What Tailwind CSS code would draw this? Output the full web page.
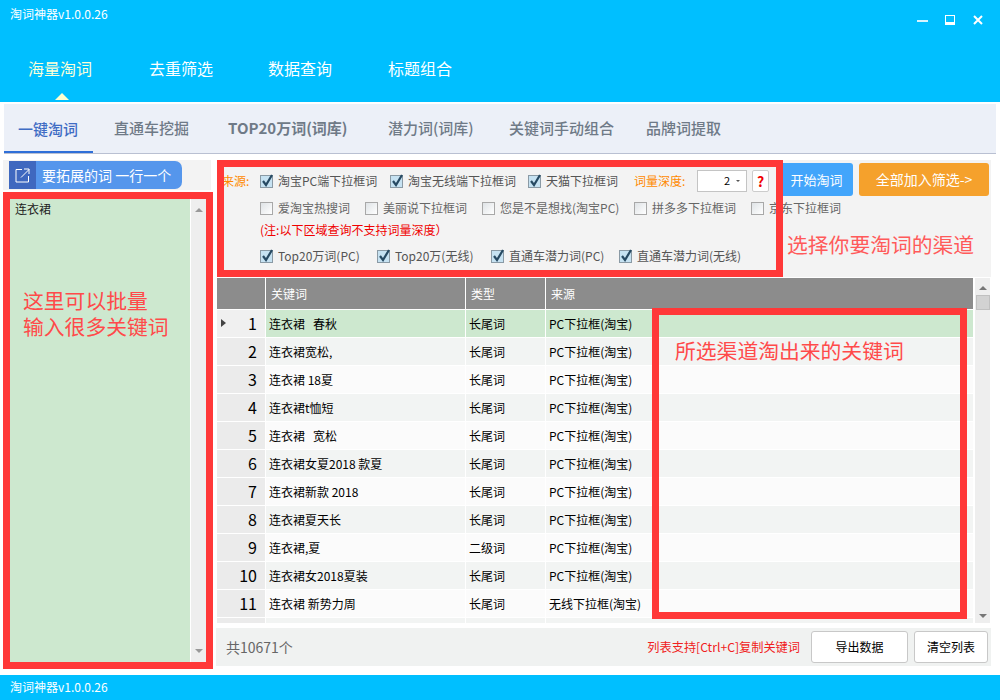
<!DOCTYPE html>
<html lang="zh-CN">
<head>
  <meta charset="UTF-8">
  <title>淘词神器</title>
  <script src="https://cdn.jsdelivr.net/npm/@tailwindcss/browser@4"></script>
</head>
<body class="bg-white text-black font-['Noto_Sans_CJK_SC','Noto_Sans',sans-serif]">
<div class="w-[1000px] h-[700px] overflow-hidden flex flex-col">

  <!-- Header -->
  <header class="relative h-[102px] shrink-0 bg-[#00bfff] text-white">
    <div class="pl-[10px] pt-[5px] text-[12px] leading-[18px] font-['Noto_Sans_CJK_SC','Roboto',sans-serif]">淘词神器v1.0.0.26</div>
    <div class="absolute right-[17px] top-[15px] flex items-center">
      <svg width="11" height="10" viewBox="0 0 11 10"><rect x="0" y="5" width="11" height="2" fill="#d6f4ff"/></svg>
      <svg class="ml-[17px]" width="10" height="10" viewBox="0 0 10 10"><rect x="0" y="0" width="10" height="10" fill="#fff"/><rect x="1" y="1" width="8" height="6" fill="#00bfff"/></svg>
      <svg class="ml-[18px]" width="10" height="10" viewBox="0 0 10 10"><path d="M1 1L9 9M9 1L1 9" stroke="#fff" stroke-width="2"/></svg>
    </div>
    <nav class="absolute left-0 top-[56px] flex text-[16px] leading-[24px]">
      <div class="relative ml-[28px] w-[121px] text-[#fdffd8]">海量淘词
        <div class="absolute left-[27px] top-[37px] w-0 h-0 border-x-[7px] border-x-transparent border-b-[7px] border-b-[#fdffd0]"></div>
      </div>
      <div class="w-[119px]">去重筛选</div>
      <div class="w-[120px]">数据查询</div>
      <div>标题组合</div>
    </nav>
  </header>

  <!-- Tabs -->
  <div class="mt-[2px] mx-[4px] w-[992px] h-[50px] shrink-0 bg-[#ecf0f8] border-b border-[#b9c0d2] flex items-center text-[15px] text-[#6f7a87] font-medium">
    <div class="w-[89px] h-[49px] pl-[14px] leading-[50px] text-[#3f6cc4] border-b-[2px] border-[#2f6fd8]">一键淘词</div>
    <div class="ml-[21px] w-[114px]">直通车挖掘</div>
    <div class="w-[160px] font-bold">TOP20万词(词库)</div>
    <div class="w-[121px]">潜力词(词库)</div>
    <div class="w-[137px]">关键词手动组合</div>
    <div>品牌词提取</div>
  </div>

  <!-- Main -->
  <main class="flex-1 flex pt-[6px] pl-[3px] pb-[6px]">

    <!-- Left column -->
    <section class="w-[210px] shrink-0 flex flex-col">
      <div class="h-[30px] w-[208px] bg-[#f3f3f3] pt-[1px] pl-[6px]">
        <div class="w-[173px] h-[28px] flex rounded-r-[7px] overflow-hidden bg-[#5596ec] text-white text-[14px] leading-[28px] whitespace-nowrap">
          <div class="w-[27px] bg-[#3f68bf] flex items-center justify-center">
            <svg width="15" height="15" viewBox="0 0 15 15" fill="none" stroke="#fff" stroke-width="1"><path d="M7 1.5H1V14H13.5V8"/><path d="M6 9.5L14 1.5M9 1H14V6"/></svg>
          </div>
          <div class="pl-[6px]">要拓展的词 一行一个</div>
        </div>
      </div>
      <div class="mt-[2px] h-[477px] border-[7px] border-[#ff3838] flex bg-white">
        <div class="w-[180px] bg-[#cde8cf] pl-[5px] pt-[1px] text-[12px] leading-[18px] text-[#222]">
          <div>连衣裙</div>
          <div class="mt-[69px] pl-[8px] text-[20.8px] leading-[26px] whitespace-nowrap text-[#ff4a4a]">这里可以批量<br>输入很多关键词</div>
        </div>
        <div class="ml-[1px] flex-1 bg-[#eeeeee] flex flex-col items-center justify-between py-[9px]">
          <div class="w-0 h-0 border-x-[4px] border-x-transparent border-b-[4px] border-b-[#999]"></div>
          <div class="w-0 h-0 border-x-[4px] border-x-transparent border-t-[4px] border-t-[#999]"></div>
        </div>
      </div>
    </section>

    <!-- Right column -->
    <section class="ml-[4px] w-[774px] flex flex-col">
      <div class="flex h-[118px]">

        <!-- Source options -->
        <div class="relative z-10 w-[566px] h-[117px] p-[7px] bg-[#f3f3f3] text-[12px] text-[#555] whitespace-nowrap">
          <div class="flex items-center h-[28px]">
            <span class="w-[38px] shrink-0 -ml-[2px] text-[#ff8a00]">来源:</span>
            <label class="w-[130px] shrink-0 flex items-center gap-[4px]"><svg class="shrink-0" width="14" height="14" viewBox="0 0 14 14"><rect x="0.5" y="1.5" width="12" height="12" fill="#c6e2f2" stroke="#8a9aa5"/><path d="M3 7L6 11L12 1" fill="none" stroke="#274a63" stroke-width="2.2"/></svg>淘宝PC端下拉框词</label>
            <label class="w-[138px] shrink-0 flex items-center gap-[4px]"><svg class="shrink-0" width="14" height="14" viewBox="0 0 14 14"><rect x="0.5" y="1.5" width="12" height="12" fill="#c6e2f2" stroke="#8a9aa5"/><path d="M3 7L6 11L12 1" fill="none" stroke="#274a63" stroke-width="2.2"/></svg>淘宝无线端下拉框词</label>
            <label class="w-[106px] shrink-0 flex items-center gap-[4px]"><svg class="shrink-0" width="14" height="14" viewBox="0 0 14 14"><rect x="0.5" y="1.5" width="12" height="12" fill="#c6e2f2" stroke="#8a9aa5"/><path d="M3 7L6 11L12 1" fill="none" stroke="#274a63" stroke-width="2.2"/></svg>天猫下拉框词</label>
            <span class="w-[63px] shrink-0 text-[#ff8a00]">词量深度:</span>
            <div class="w-[50px] h-[22px] shrink-0 bg-white border border-[#c4c4c4] flex items-center justify-end pr-[6px] gap-[6px] text-black">
              <span class="text-[11px] -mt-[2px]">2</span>
              <div class="w-0 h-0 border-x-[2px] border-x-transparent border-t-[2px] border-t-[#555]"></div>
            </div>
            <div class="ml-[5px] w-[17px] h-[22px] shrink-0 bg-white border border-[#ccc] rounded-[2px] text-center font-bold text-[14px] leading-[20px] text-[#f00000]">?</div>
          </div>
          <div class="flex items-center h-[26px] pl-[36px] text-[#666]">
            <label class="w-[105px] shrink-0 flex items-center gap-[5px]"><span class="w-[13px] h-[13px] shrink-0 border border-[#a8a8a8] bg-linear-to-br from-[#dfe3e6] to-white"></span>爱淘宝热搜词</label>
            <label class="w-[117px] shrink-0 flex items-center gap-[5px]"><span class="w-[13px] h-[13px] shrink-0 border border-[#a8a8a8] bg-linear-to-br from-[#dfe3e6] to-white"></span>美丽说下拉框词</label>
            <label class="w-[152px] shrink-0 flex items-center gap-[5px]"><span class="w-[13px] h-[13px] shrink-0 border border-[#a8a8a8] bg-linear-to-br from-[#dfe3e6] to-white"></span>您是不是想找(淘宝PC)</label>
            <label class="w-[117px] shrink-0 flex items-center gap-[5px]"><span class="w-[13px] h-[13px] shrink-0 border border-[#a8a8a8] bg-linear-to-br from-[#dfe3e6] to-white"></span>拼多多下拉框词</label>
            <label class="shrink-0 flex items-center gap-[5px]"><span class="w-[13px] h-[13px] shrink-0 border border-[#a8a8a8] bg-linear-to-br from-[#dfe3e6] to-white"></span>京东下拉框词</label>
          </div>
          <div class="h-[18px] pl-[36px] leading-[18px] text-[#f00000]">(注:以下区域查询不支持词量深度）</div>
          <div class="flex items-center h-[31px] pt-[3px] pl-[36px]">
            <label class="w-[117px] shrink-0 flex items-center gap-[4px]"><svg class="shrink-0" width="14" height="14" viewBox="0 0 14 14"><rect x="0.5" y="1.5" width="12" height="12" fill="#c6e2f2" stroke="#8a9aa5"/><path d="M3 7L6 11L12 1" fill="none" stroke="#274a63" stroke-width="2.2"/></svg>Top20万词(PC)</label>
            <label class="w-[114px] shrink-0 flex items-center gap-[4px]"><svg class="shrink-0" width="14" height="14" viewBox="0 0 14 14"><rect x="0.5" y="1.5" width="12" height="12" fill="#c6e2f2" stroke="#8a9aa5"/><path d="M3 7L6 11L12 1" fill="none" stroke="#274a63" stroke-width="2.2"/></svg>Top20万(无线)</label>
            <label class="w-[128px] shrink-0 flex items-center gap-[4px]"><svg class="shrink-0" width="14" height="14" viewBox="0 0 14 14"><rect x="0.5" y="1.5" width="12" height="12" fill="#c6e2f2" stroke="#8a9aa5"/><path d="M3 7L6 11L12 1" fill="none" stroke="#274a63" stroke-width="2.2"/></svg>直通车潜力词(PC)</label>
            <label class="shrink-0 flex items-center gap-[4px]"><svg class="shrink-0" width="14" height="14" viewBox="0 0 14 14"><rect x="0.5" y="1.5" width="12" height="12" fill="#c6e2f2" stroke="#8a9aa5"/><path d="M3 7L6 11L12 1" fill="none" stroke="#274a63" stroke-width="2.2"/></svg>直通车潜力词(无线)</label>
          </div>
          <!-- Annotation frame over the options -->
          <div class="absolute inset-0 border-[7px] border-[#ff3838]"></div>
        </div>

        <!-- Start buttons -->
        <div class="w-[208px] h-[117px] bg-[#f3f3f3] pt-[3px] text-white">
          <div class="flex h-[33px] leading-[33px] text-center">
            <div class="w-[70px] pr-[3px] bg-[#42a5fb] rounded-r-[3px] text-[13px]">开始淘词</div>
            <div class="ml-[6px] w-[130px] bg-[#f5a12c] rounded-[3px] text-[14px]">全部加入筛选-&gt;</div>
          </div>
          <div class="mt-[33px] pl-[4px] text-[20.8px] leading-[30px] whitespace-nowrap text-[#ff5a5a]">选择你要淘词的渠道</div>
        </div>
      </div>

      <!-- Table -->
      <div class="relative flex h-[345px]">
        <div class="w-[756px] overflow-hidden text-[12px]">
          <div class="grid grid-cols-[48px_199px_79px_427px] gap-x-px h-[32px] bg-white text-white">
            <div class="bg-[#8c8c8c] h-[31px]"></div>
            <div class="bg-[#8c8c8c] h-[31px] pl-[5px] leading-[31px]">关键词</div>
            <div class="bg-[#8c8c8c] h-[31px] pl-[5px] leading-[31px]">类型</div>
            <div class="bg-[#8c8c8c] h-[31px] pl-[5px] leading-[31px]">来源</div>
          </div>
          <div class="grid grid-cols-[48px_199px_79px_427px] gap-x-px h-[28px] pb-px leading-[27px]">
            <div class="relative bg-[#f0f0f0] text-right pr-[8px] text-[16px]"><div class="absolute left-[4px] top-[9px] w-0 h-0 border-y-[4.5px] border-y-transparent border-l-[5px] border-l-[#444]"></div>1</div>
            <div class="bg-[#cde8cf] pl-[3px]">连衣裙&nbsp;&nbsp;&nbsp;春秋</div><div class="bg-[#cde8cf] pl-[3px]">长尾词</div><div class="bg-[#cde8cf] pl-[3px]">PC下拉框(淘宝)</div>
          </div>
          <div class="grid grid-cols-[48px_199px_79px_427px] gap-x-px h-[28px] pb-px leading-[27px]">
            <div class="bg-[#ebebeb] text-right pr-[8px] text-[16px]">2</div><div class="bg-[#f2f4f3] pl-[3px]">连衣裙宽松,</div><div class="bg-[#f2f4f3] pl-[3px]">长尾词</div><div class="bg-[#f2f4f3] pl-[3px]">PC下拉框(淘宝)</div>
          </div>
          <div class="grid grid-cols-[48px_199px_79px_427px] gap-x-px h-[28px] pb-px leading-[27px]">
            <div class="bg-[#ebebeb] text-right pr-[8px] text-[16px]">3</div><div class="bg-[#fbfbfb] pl-[3px]">连衣裙 18夏</div><div class="bg-[#fbfbfb] pl-[3px]">长尾词</div><div class="bg-[#fbfbfb] pl-[3px]">PC下拉框(淘宝)</div>
          </div>
          <div class="grid grid-cols-[48px_199px_79px_427px] gap-x-px h-[28px] pb-px leading-[27px]">
            <div class="bg-[#ebebeb] text-right pr-[8px] text-[16px]">4</div><div class="bg-[#f2f4f3] pl-[3px]">连衣裙t恤短</div><div class="bg-[#f2f4f3] pl-[3px]">长尾词</div><div class="bg-[#f2f4f3] pl-[3px]">PC下拉框(淘宝)</div>
          </div>
          <div class="grid grid-cols-[48px_199px_79px_427px] gap-x-px h-[28px] pb-px leading-[27px]">
            <div class="bg-[#ebebeb] text-right pr-[8px] text-[16px]">5</div><div class="bg-[#fbfbfb] pl-[3px]">连衣裙&nbsp;&nbsp;&nbsp;宽松</div><div class="bg-[#fbfbfb] pl-[3px]">长尾词</div><div class="bg-[#fbfbfb] pl-[3px]">PC下拉框(淘宝)</div>
          </div>
          <div class="grid grid-cols-[48px_199px_79px_427px] gap-x-px h-[28px] pb-px leading-[27px]">
            <div class="bg-[#ebebeb] text-right pr-[8px] text-[16px]">6</div><div class="bg-[#f2f4f3] pl-[3px]">连衣裙女夏2018 款夏</div><div class="bg-[#f2f4f3] pl-[3px]">长尾词</div><div class="bg-[#f2f4f3] pl-[3px]">PC下拉框(淘宝)</div>
          </div>
          <div class="grid grid-cols-[48px_199px_79px_427px] gap-x-px h-[28px] pb-px leading-[27px]">
            <div class="bg-[#ebebeb] text-right pr-[8px] text-[16px]">7</div><div class="bg-[#fbfbfb] pl-[3px]">连衣裙新款 2018</div><div class="bg-[#fbfbfb] pl-[3px]">长尾词</div><div class="bg-[#fbfbfb] pl-[3px]">PC下拉框(淘宝)</div>
          </div>
          <div class="grid grid-cols-[48px_199px_79px_427px] gap-x-px h-[28px] pb-px leading-[27px]">
            <div class="bg-[#ebebeb] text-right pr-[8px] text-[16px]">8</div><div class="bg-[#f2f4f3] pl-[3px]">连衣裙夏天长</div><div class="bg-[#f2f4f3] pl-[3px]">长尾词</div><div class="bg-[#f2f4f3] pl-[3px]">PC下拉框(淘宝)</div>
          </div>
          <div class="grid grid-cols-[48px_199px_79px_427px] gap-x-px h-[28px] pb-px leading-[27px]">
            <div class="bg-[#ebebeb] text-right pr-[8px] text-[16px]">9</div><div class="bg-[#fbfbfb] pl-[3px]">连衣裙,夏</div><div class="bg-[#fbfbfb] pl-[3px]">二级词</div><div class="bg-[#fbfbfb] pl-[3px]">PC下拉框(淘宝)</div>
          </div>
          <div class="grid grid-cols-[48px_199px_79px_427px] gap-x-px h-[28px] pb-px leading-[27px]">
            <div class="bg-[#ebebeb] text-right pr-[8px] text-[16px]">10</div><div class="bg-[#f2f4f3] pl-[3px]">连衣裙女2018夏装</div><div class="bg-[#f2f4f3] pl-[3px]">长尾词</div><div class="bg-[#f2f4f3] pl-[3px]">PC下拉框(淘宝)</div>
          </div>
          <div class="grid grid-cols-[48px_199px_79px_427px] gap-x-px h-[28px] pb-px leading-[27px]">
            <div class="bg-[#ebebeb] text-right pr-[8px] text-[16px]">11</div><div class="bg-[#fbfbfb] pl-[3px]">连衣裙 新势力周</div><div class="bg-[#fbfbfb] pl-[3px]">长尾词</div><div class="bg-[#fbfbfb] pl-[3px]">无线下拉框(淘宝)</div>
          </div>
          <div class="grid grid-cols-[48px_199px_79px_427px] gap-x-px h-[5px]">
            <div class="bg-[#ebebeb]"></div><div class="bg-[#f2f4f3]"></div><div class="bg-[#f2f4f3]"></div><div class="bg-[#f2f4f3]"></div>
          </div>
        </div>

        <!-- Table scrollbar -->
        <div class="ml-[2px] w-[15px] bg-[#eeeeee] flex flex-col items-center pt-[8px]">
          <div class="w-0 h-0 border-x-[4px] border-x-transparent border-b-[4px] border-b-[#777]"></div>
          <div class="mt-[5px] w-[14px] h-[15px] bg-[#d2d2d2] border border-[#c0c0c0]"></div>
          <div class="mt-auto mb-[5px] w-0 h-0 border-x-[4px] border-x-transparent border-t-[4px] border-t-[#777]"></div>
        </div>

        <!-- Annotation frame over the table -->
        <div class="absolute left-[435px] top-[30px] w-[315px] h-[311px] border-[7px] border-[#ff3838] pl-[16px] pt-[21px] text-[20.8px] leading-[28px] whitespace-nowrap text-[#ff4a4a]">所选渠道淘出来的关键词</div>
      </div>

      <!-- Bottom bar -->
      <div class="mt-[5px] -ml-px w-[775px] h-[38px] bg-[#f0f2f1] flex items-center pl-[10px] pr-[3px]">
        <span class="text-[14px] text-[#666]">共10671个</span>
        <span class="ml-auto text-[12.2px] text-[#f02020]">列表支持[Ctrl+C]复制关键词</span>
        <div class="ml-[11px] w-[97px] h-[32px] bg-white border border-[#c8c8c8] rounded-[3px] text-center text-[12px] leading-[30px]">导出数据</div>
        <div class="ml-[6px] w-[74px] h-[32px] bg-white border border-[#c8c8c8] rounded-[3px] text-center text-[12px] leading-[30px]">清空列表</div>
      </div>
    </section>
  </main>

  <!-- Status bar -->
  <footer class="h-[25px] shrink-0 bg-[#00bfff] pl-[10px] text-[12px] leading-[24px] text-white">淘词神器v1.0.0.26</footer>
</div>
</body>
</html>
